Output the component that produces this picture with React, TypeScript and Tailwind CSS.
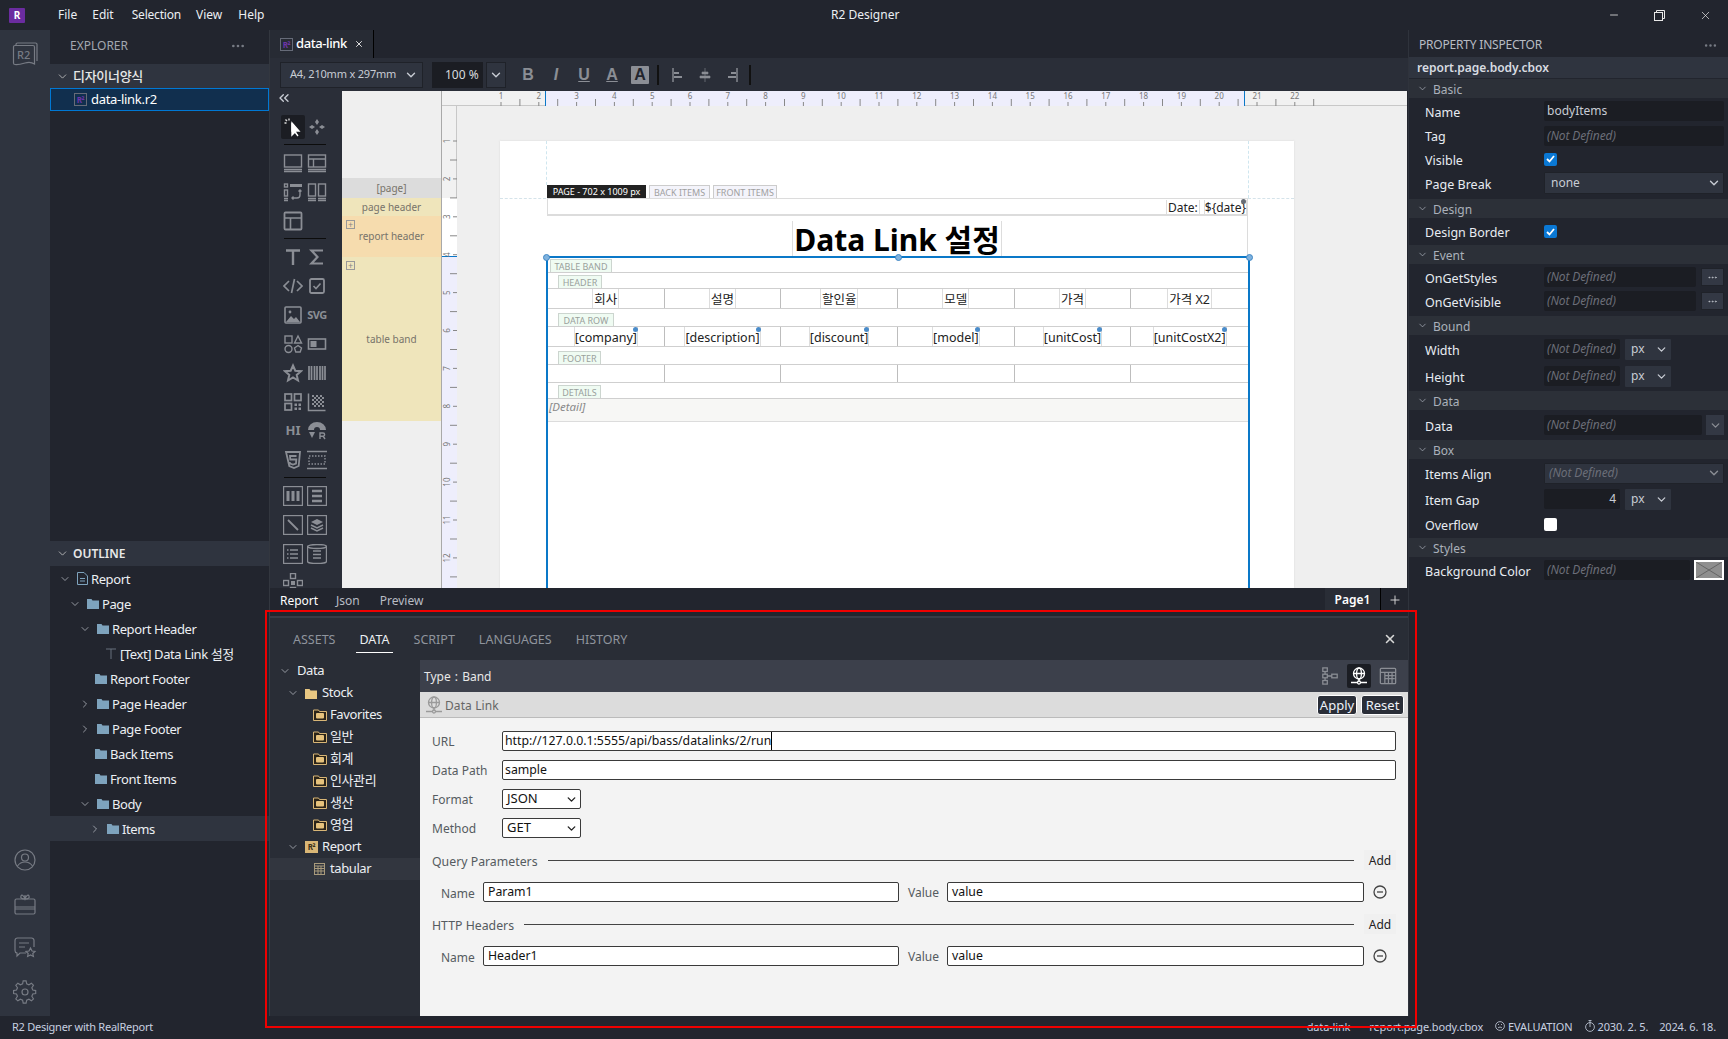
import React from 'react';
import { ChevronDown, ChevronRight, ChevronsLeft, Ellipsis, Minus, Plus, X } from 'lucide-react';

const G = '#8b8e95';

const Svg: React.FC<{ s?: number; c?: string; children: React.ReactNode; vb?: string }> = ({ s = 20, c = G, children, vb = '0 0 20 20' }) => (
  <svg width={s} height={s} viewBox={vb} fill="none" stroke={c} strokeWidth={1.4} className="shrink-0">
    {children}
  </svg>
);

const Folder: React.FC<{ color?: string }> = ({ color = '#7ea3bd' }) => (
  <svg width="12" height="11" viewBox="0 0 12 11" className="shrink-0">
    <path d="M0 1h4.5l1 1.5H12V11H0z" fill={color} />
  </svg>
);

const BoxFolder: React.FC = () => (
  <svg width="14" height="12" viewBox="0 0 14 12" className="shrink-0">
    <path d="M.5 1h5l1 1.5h7v9H.5z" fill="#2b2418" stroke="#d9b676" />
    <rect x="3" y="4" width="8" height="5.5" rx="1" fill="#e6c27c" />
  </svg>
);

const R2File: React.FC = () => (
  <span className="w-[13px] h-[13px] border border-[#666b78] text-[8px] leading-[11px] text-center font-bold text-[#6d35a8] shrink-0">R²</span>
);

const Globe: React.FC<{ c?: string }> = ({ c = '#9a9a9a' }) => (
  <svg width="18" height="18" viewBox="0 0 18 18" fill="none" stroke={c} strokeWidth="1.3" className="shrink-0">
    <circle cx="9" cy="6.5" r="5.5" />
    <ellipse cx="9" cy="6.5" rx="2.4" ry="5.5" />
    <path d="M3.5 6.5h11M9 12v2.5M1 15.5h6M11 15.5h6" />
    <circle cx="9" cy="15.5" r="1.5" />
  </svg>
);

const toolRows: (React.ReactNode[] | string)[] = [
  [
    <Svg><path d="M9 6v12l3-3 3 4" fill="#fff" stroke="#fff" /><path d="M9 6l7 8h-7z" fill="#fff" stroke="#fff" /><path d="M6 1.5v2M1.5 6h2M2.5 2.5L4 4" stroke="#ddd" /></Svg>,
    <Svg><path d="M10 2l2 3-2 3-2-3zM10 12l2 3-2 3-2-3zM2 10l3-2 3 2-3 2zM12 10l3-2 3 2-3 2z" fill={G} stroke="none" /></Svg>,
  ],
  'sep',
  [
    <Svg><rect x="1.5" y="2" width="17" height="12" /><path d="M1 16.5h18M1 18.5h18" /></Svg>,
    <Svg><rect x="1.5" y="2" width="17" height="12" /><path d="M1.5 6h17M6.5 6v8M1 16.5h18M1 18.5h18" /></Svg>,
  ],
  [
    <Svg><path d="M7 2h12v3H7z" fill={G} stroke="none" /><rect x="1.5" y="2" width="3" height="3" /><rect x="1.5" y="8" width="3" height="6" /><path d="M1 16.5h4M1 18.5h4M17 8v5a3 3 0 0 1-3 3H9M15.5 9.5L17 8l1.5 1.5M10.5 14.5L9 16l1.5 1.5" /></Svg>,
    <Svg><rect x="1.5" y="2" width="7" height="12" /><rect x="11.5" y="2" width="7" height="12" /><path d="M1 16.5h8M1 18.5h8M11 16.5h8M11 18.5h8" /></Svg>,
  ],
  [
    <Svg><rect x="1.5" y="1.5" width="17" height="17" rx="1" strokeWidth="1.8" /><path d="M1.5 7h17M7.5 7v11.5" strokeWidth="1.6" /></Svg>,
  ],
  'sep',
  [
    <Svg><path d="M3 3.5h14M10 3.5V18" strokeWidth="2.4" /></Svg>,
    <Svg><path d="M16 3.5H4.5l6 6.5-6 6.5H16" strokeWidth="2.2" /></Svg>,
  ],
  [
    <Svg><path d="M6 5l-5 5 5 5M14 5l5 5-5 5M11.5 3l-3 14" strokeWidth="1.7" /></Svg>,
    <Svg><rect x="3" y="3" width="14" height="14" rx="1.5" strokeWidth="1.8" /><path d="M6.5 10l2.5 2.5 4.5-5" strokeWidth="1.6" /></Svg>,
  ],
  [
    <Svg><rect x="2" y="2" width="16" height="16" rx="1" strokeWidth="1.6" /><path d="M3 17l5-6 3 3 2-2 4 5z" fill={G} stroke="none" /><circle cx="7" cy="7" r="1.4" fill={G} stroke="none" /></Svg>,
    <span className="text-[11px] font-bold text-[#8b8e95] tracking-[-0.5px]">SVG</span>,
  ],
  [
    <Svg><rect x="2" y="2" width="7" height="7" /><path d="M15 2l3.5 7h-7z" /><circle cx="5.5" cy="15" r="3.5" /><path d="M15 11.5l3.5 2.5-1.3 4h-4.4l-1.3-4z" /></Svg>,
    <Svg><rect x="1.5" y="5" width="17" height="10" strokeWidth="1.6" /><rect x="3.5" y="7" width="6" height="6" fill={G} stroke="none" /></Svg>,
  ],
  [
    <Svg><path d="M10 2.5l2.3 5.2 5.7.5-4.3 3.7 1.3 5.6-5-3-5 3 1.3-5.6L2 8.2l5.7-.5z" strokeWidth="2" /></Svg>,
    <Svg><path d="M2 3v14M4.5 3v14M7.5 3v14M10 3v14M13 3v14M15.5 3v14M18 3v14" strokeWidth="1.7" /></Svg>,
  ],
  [
    <Svg><rect x="2" y="2" width="6.5" height="6.5" strokeWidth="1.7" /><rect x="11.5" y="2" width="6.5" height="6.5" strokeWidth="1.7" /><rect x="2" y="11.5" width="6.5" height="6.5" strokeWidth="1.7" /><path d="M11.5 11.5h2.5v2.5h-2.5zM15.5 15.5H18V18h-2.5zM11.5 15.5h2.5V18h-2.5zM15.5 11.5H18V14h-2.5z" fill={G} stroke="none" /></Svg>,
    <Svg><path d="M1.5 1.5v17h17" strokeWidth="1.5" /><path d="M5 3h2v2H5zM9 3h2v2H9zM13 3h2v2h-2zM7 5h2v2H7zM11 5h2v2h-2zM15 5h2v2h-2zM5 7h2v2H5zM9 7h2v2H9zM13 7h2v2h-2zM7 9h2v2H7zM11 9h2v2h-2zM15 9h2v2h-2zM5 11h2v2H5zM9 11h2v2H9zM13 11h2v2h-2zM7 13h2v2H7zM11 13h2v2h-2zM15 13h2v2h-2z" fill={G} stroke="none" /></Svg>,
  ],
  [
    <span className="text-[13px] font-bold text-[#8b8e95]">HI</span>,
    <Svg><path d="M1 9a9 8 0 0 1 18 0h-6a3 3 0 0 0-6 0z" fill={G} stroke="none" /><path d="M2 11h6l-3 6z" fill={G} stroke="none" /><path d="M13 18v-6h3a1.5 1.5 0 0 1 0 3.2h-3M16 15l2 3" /></Svg>,
  ],
  [
    <Svg><path d="M3 2h14l-1.3 14-4.7 2-4.7-2z" strokeWidth="1.8" /><path d="M13.5 6H7l.3 3.5h6L13 13.5l-3 1-3-1-.2-1.5" strokeWidth="1.8" /></Svg>,
    <Svg><path d="M0 1.5h20M0 18.5h20" strokeWidth="1.5" /><rect x="2" y="6" width="16" height="8" strokeDasharray="1.5 1.5" /></Svg>,
  ],
  'sep',
  [
    <Svg><rect x=".5" y=".5" width="19" height="19" /><path d="M5 5v10M10 5v10M15 5v10" strokeWidth="3" /></Svg>,
    <Svg><rect x=".5" y=".5" width="19" height="19" /><path d="M5 5h10M5 10h10M5 15h10" strokeWidth="2.4" /></Svg>,
  ],
  [
    <Svg><rect x=".5" y=".5" width="19" height="19" /><path d="M5 5l10 10" strokeWidth="1.8" /></Svg>,
    <Svg><rect x=".5" y=".5" width="19" height="19" /><path d="M10 4l6 3-6 3-6-3z" fill={G} stroke="none" /><path d="M4 10l6 3 6-3M4 13l6 3 6-3" strokeWidth="1.5" /></Svg>,
  ],
  [
    <Svg><rect x=".5" y=".5" width="19" height="19" /><path d="M7 6h8M7 10h8M7 14h8M4 6h1.5M4 10h1.5M4 14h1.5" strokeWidth="1.5" /></Svg>,
    <Svg><ellipse cx="10" cy="2.5" rx="9.5" ry="2" /><path d="M.5 2.5v15c0 1 4 2 9.500 2s9.500-1 9.500-2v-15M6 7h8M6 10.500h8M6 14h8" /></Svg>,
  ],
  [
    <Svg><rect x="7.500" y="0.500" width="5" height="5" /><rect x="0.500" y="7.500" width="5" height="5" /><rect x="14.500" y="7.500" width="5" height="5" /><rect x="7.500" y="14.500" width="5" height="5" /><rect x="8" y="8" width="4" height="4" fill={G} stroke="none" /></Svg>,
  ],
];

const outline = [
  { label: 'Report', pl: 'pl-[9px]', chev: 'down', icon: 'doc' },
  { label: 'Page', pl: 'pl-[19px]', chev: 'down', icon: 'folder' },
  { label: 'Report Header', pl: 'pl-[29px]', chev: 'down', icon: 'folder' },
  { label: '[Text] Data Link 설정', pl: 'pl-[56px]', icon: 'text' },
  { label: 'Report Footer', pl: 'pl-[45px]', icon: 'folder' },
  { label: 'Page Header', pl: 'pl-[29px]', chev: 'right', icon: 'folder' },
  { label: 'Page Footer', pl: 'pl-[29px]', chev: 'right', icon: 'folder' },
  { label: 'Back Items', pl: 'pl-[45px]', icon: 'folder' },
  { label: 'Front Items', pl: 'pl-[45px]', icon: 'folder' },
  { label: 'Body', pl: 'pl-[29px]', chev: 'down', icon: 'folder' },
  { label: 'Items', pl: 'pl-[39px]', chev: 'right', icon: 'folder', selected: true },
];

const ActivityBar: React.FC = () => (
  <div className="w-[50px] bg-[#2f343f] flex flex-col items-center justify-between pt-[11px] pb-[12px] shrink-0">
    <div className="relative w-[26px] h-[26px]">
      <svg width="26" height="26" viewBox="0 0 26 26" fill="none" stroke="#777b84" strokeWidth="1.2">
        <path d="M3 4.500h18a1.500 1.500 0 0 1 1.500 1.500v17c-3-2-6-2-9.500-1s-7 2-10 1.500a1.500 1.500 0 0 1-1.500-1.500V6A1.500 1.500 0 0 1 3 4.500z" />
        <path d="M4 4.500V3.500A1.500 1.500 0 0 1 5.500 2h18A1.500 1.500 0 0 1 25 3.500V20" />
      </svg>
      <span className="absolute left-[5px] top-[6px] text-[11px] font-medium text-[#777b84]">R2</span>
    </div>
    <div className="flex flex-col items-center gap-[20px]">
      <svg width="24" height="24" viewBox="0 0 24 24" fill="none" stroke="#777b84" strokeWidth="1.2"><circle cx="12" cy="12" r="10" /><circle cx="12" cy="9.500" r="3.500" /><path d="M4.500 18c2-3 4.500-4 7.500-4s5.500 1 7.500 4" /></svg>
      <svg width="24" height="24" viewBox="0 0 24 24" fill="none" stroke="#777b84" strokeWidth="1.2"><rect x="2" y="7" width="20" height="15" rx="1.500" /><path d="M2 15h20M2 17h20M12 7V3M12 7c-3 0-5-1-4-3s3 0 4 3c1-3 3-5 4-3s-1 3-4 3z" /></svg>
      <svg width="24" height="24" viewBox="0 0 24 24" fill="none" stroke="#777b84" strokeWidth="1.2"><path d="M13 17H7l-3 3v-3a2.500 2.500 0 0 1-2-2.500V4.500A2.500 2.500 0 0 1 4.500 2h14A2.500 2.500 0 0 1 21 4.500V11" /><path d="M6 7h10M6 11h6" /><path d="M17.500 12l1.500 3 3 .4-2.200 2.100.6 3-2.900-1.500-2.900 1.500.6-3-2.200-2.100 3-.4z" /></svg>
      <svg width="24" height="24" viewBox="0 0 24 24" fill="none" stroke="#777b84" strokeWidth="1.2"><circle cx="12" cy="12" r="3" /><path d="M10.500 1.500h3l.6 3 2.300 1 2.600-1.700 2.100 2.100L19.400 8.500l1 2.300 3 .6v3l-3 .6-1 2.300 1.700 2.600-2.100 2.100-2.600-1.700-2.300 1-.6 3h-3l-.6-3-2.300-1-2.600 1.700-2.100-2.100 1.700-2.600-1-2.300-3-.6v-3l3-.6 1-2.300-1.700-2.600L5 3.800l2.600 1.700 2.300-1z" transform="translate(0 -.5) scale(.97)" /></svg>
    </div>
  </div>
);

const Explorer: React.FC = () => (
  <div className="w-[219px] flex flex-col shrink-0 bg-[#22252e] text-[13px] tracking-[-0.3px]">
    <div className="h-[34px] flex items-center justify-between pl-[20px] pr-[23px] pb-[2px] shrink-0">
      <span className="text-[#a3a7b0] text-[12px] tracking-normal">EXPLORER</span>
      <Ellipsis size={16} color="#777b84" />
    </div>
    <div className="h-[24px] bg-[#2f343f] flex items-center pl-[6px] gap-[4px] text-[#e8e8e8] font-medium shrink-0">
      <ChevronDown size={13} color="#c8c8c8" strokeWidth={1.5} />
      <span className="pt-[1px]">디자이너양식</span>
    </div>
    <div className="h-[23px] bg-[#112f4e] border border-[#0078d4] flex items-center pl-[23px] gap-[4px] text-white shrink-0">
      <R2File />
      <span>data-link.r2</span>
    </div>
    <div className="h-[430px] shrink-0" />
    <div className="h-[25px] bg-[#2f343f] flex items-center pl-[6px] gap-[4px] text-[#e8e8e8] text-[12px] font-semibold shrink-0 tracking-normal">
      <ChevronDown size={13} color="#c8c8c8" strokeWidth={1.5} />
      <span className="pt-[1px]">OUTLINE</span>
    </div>
    {outline.map((r) => (
      <div key={r.label} className={`h-[25px] flex items-center shrink-0 text-[#eceff3] ${r.pl} ${r.selected ? 'bg-[#2f343f]' : ''}`}>
        {r.chev === 'down' && <ChevronDown size={12} color="#b8bcc4" strokeWidth={1.5} className="mr-[6px]" />}
        {r.chev === 'right' && <ChevronRight size={12} color="#b8bcc4" strokeWidth={1.5} className="mr-[6px]" />}
        {r.icon === 'folder' && <Folder />}
        {r.icon === 'doc' && (
          <svg width="11" height="13" viewBox="0 0 11 13" fill="none" stroke="#7ea3bd" className="shrink-0"><path d="M.5.500h6.500l3.500 3.500v8.500h-10zM3 6.500h5M3 9h5" /></svg>
        )}
        {r.icon === 'text' && (
          <svg width="10" height="11" viewBox="0 0 10 11" fill="none" stroke="#66717c" className="shrink-0"><path d="M0 1h10M5 1v10" /></svg>
        )}
        <span className={`tracking-[-0.4px] pt-[2px] ${r.icon === 'text' ? 'ml-[4px]' : 'ml-[3px]'}`}>{r.label}</span>
      </div>
    ))}
  </div>
);

const Toolbar: React.FC = () => (
  <div className="h-[33px] bg-[#2a2e38] flex items-center pl-[10px] text-[#c8ccd4] shrink-0">
    <div className="w-[143px] h-[26px] bg-[#2f343f] border border-[#1f2229] flex items-center justify-between pl-[9px] pr-[4px] text-[11px]">
      <span className="tracking-[-0.2px]">A4, 210mm x 297mm</span>
      <ChevronDown size={14} strokeWidth={2.4} />
    </div>
    <div className="w-[51px] h-[26px] bg-[#1b1d23] ml-[9px] pl-[13px] text-[12px] flex items-center text-[#d8dade]">100 %</div>
    <div className="w-[20px] h-[26px] bg-[#2f343f] border border-[#1f2229] ml-[3px] flex items-center justify-center">
      <ChevronDown size={14} strokeWidth={2.4} />
    </div>
    <div className="flex items-center ml-[8px] text-[#8b8e95] font-bold text-[16px] [font-family:'Liberation_Sans',sans-serif]">
      <span className="w-[28px] text-center">B</span>
      <span className="w-[28px] text-center italic">I</span>
      <span className="w-[28px] text-center underline">U</span>
      <span className="w-[28px] text-center underline">A</span>
      <span className="w-[18px] h-[18px] leading-[18px] bg-[#8b8e95] text-[#22252e] text-center rounded-[1px] ml-[5px]">A</span>
    </div>
    <div className="w-[2px] h-[20px] bg-[#111] ml-[8px]" />
    <div className="flex items-center gap-[7px] ml-[9px]">
      <Svg><path d="M5 3v14" /><path d="M6 7h5v2H6zM6 11h8v2H6z" fill={G} stroke="none" /></Svg>
      <Svg><path d="M10 3v14M7 7h6v2H7zM5 11h10v2H5z" fill={G} stroke={G} strokeWidth={.6} /></Svg>
      <Svg><path d="M15 3v14" /><path d="M9 7h5v2H9zM6 11h8v2H6z" fill={G} stroke="none" /></Svg>
    </div>
    <div className="w-[2px] h-[20px] bg-[#111] ml-[7px]" />
  </div>
);

const Palette: React.FC = () => (
  <div className="w-[72px] bg-[#2a2e38] flex flex-col items-start pl-[11px] overflow-hidden shrink-0">
    <div className="h-[13px] mb-[11px] flex items-center shrink-0">
      <ChevronsLeft size={16} color="#c8ccd4" strokeWidth={2} className="-ml-[5px]" />
    </div>
    {toolRows.map((row, i) =>
      row === 'sep' ? (
        <div key={i} className="w-[42px] h-[1px] bg-[#0c0c0c] ml-[3px] mb-[6px] shrink-0" />
      ) : (
        <div key={i} className="flex h-[29px] w-[48px] shrink-0">
          {(row as React.ReactNode[]).map((icon, j) => (
            <div key={j} className={`w-[24px] h-[24px] flex items-center justify-center ${i === 0 && j === 0 ? 'bg-[#1b1d23] rounded-[2px]' : ''}`}>
              {icon}
            </div>
          ))}
        </div>
      )
    )}
  </div>
);

const BandLabels: React.FC = () => (
  <div className="w-[100px] border-r border-[#a9a9a9] flex flex-col text-[10px] text-[#77736a] text-center shrink-0 bg-[#efefef]">
    <div className="h-[87px]" />
    <div className="h-[20px] bg-[#dcdcdc] leading-[20px]">[page]</div>
    <div className="h-[18px] bg-[#efe5bb] leading-[18px]">page header</div>
    <div className="h-[41px] bg-[#f6dcae] leading-[41px] relative">
      report header
      <span className="absolute left-[4px] top-[4px] w-[9px] h-[9px] border border-[#999] text-[9px] leading-[7px] text-[#888]">+</span>
    </div>
    <div className="h-[164px] bg-[#efe5bb] relative flex items-center justify-center">
      table band
      <span className="absolute left-[4px] top-[4px] w-[9px] h-[9px] border border-[#999] text-[9px] leading-[7px] text-[#888]">+</span>
    </div>
  </div>
);

const HRuler: React.FC = () => {
  const nums = Array.from({ length: 22 }, (_, i) => i + 1);
  return (
    <svg width="965" height="15" className="block shrink-0 bg-[#f1f1f1] border-b border-[#c8c8c8] overflow-visible">
      <rect x="103" y="0" width="699" height="15" fill="#eeeefc" />
      <path d="M103.500 0v15M802.500 0v15" stroke="#0a78c8" />
      {nums.map((n) => {
        const x = 59 + (n - 1) * 37.8;
        return (
          <g key={n}>
            <path d={`M${x} 11v4M${x + 18.900} 8v7`} stroke="#888" />
            <text x={x} y="8" fontSize="8" fill="#777" textAnchor="middle">{n}</text>
          </g>
        );
      })}
    </svg>
  );
};

const VRuler: React.FC = () => {
  const nums = Array.from({ length: 12 }, (_, i) => i + 1);
  return (
    <svg width="15" height="482" className="block shrink-0 bg-[#f1f1f1] border-r border-[#c8c8c8] overflow-visible">
      <rect x="0" y="92" width="15" height="58" fill="#fff" />
      <rect x="0" y="150" width="15" height="332" fill="#eeeefc" />
      <path d="M0 150.500h15" stroke="#0a78c8" />
      {nums.map((n) => {
        const y = 35 + (n - 1) * 37.9;
        return (
          <g key={n}>
            <path d={`M11 ${y}h4M8 ${y + 19}h7`} stroke="#888" />
            <text x="0" y="0" fontSize="8" fill="#777" textAnchor="middle" transform={`translate(8 ${y}) rotate(-90)`}>{n}</text>
          </g>
        );
      })}
    </svg>
  );
};

const Tag: React.FC<{ children: React.ReactNode; ml: string; w: string }> = ({ children, ml, w }) => (
  <span className={`${ml} ${w} h-[13px] leading-[13px] border border-b-0 border-[#ccd5cf] bg-[#effbf2] text-[9px] text-[#9aa09c] text-center`}>{children}</span>
);

const TagRow: React.FC<{ h: string; children: React.ReactNode }> = ({ h, children }) => (
  <div className={`${h} border-b border-[#cfcfcf] flex items-end`}>{children}</div>
);

const Handle: React.FC<{ big?: boolean; pos: string }> = ({ big, pos }) => (
  <span className={`absolute ${pos} ${big ? 'w-[7px] h-[7px] bg-[#7fb2de] border border-[#3f86c4]' : 'w-[5px] h-[5px] bg-[#4a8bc9]'} rounded-full`} />
);

const headers = ['회사', '설명', '할인율', '모델', '가격', '가격 X2'];
const fields = ['[company]', '[description]', '[discount]', '[model]', '[unitCost]', '[unitCostX2]'];

const ReportPage: React.FC = () => (
  <div className="ml-[43px] mr-[113px] mt-[35px] flex-1 bg-white relative overflow-hidden shadow-[0_0_2px_#d8d8d8]">
    <div className="absolute left-0 top-[57px] w-[46px] border-t border-dashed border-[#d5e3ea]" />
    <div className="absolute right-0 top-[57px] w-[46px] border-t border-dashed border-[#d5e3ea]" />
    <div className="absolute left-[46px] top-0 h-[44px] border-l border-dashed border-[#cfe6ef]" />
    <div className="absolute left-[748px] top-0 h-[57px] border-l border-dashed border-[#cfe6ef]" />
    <div className="ml-[47px] w-[701px] pt-[44px]">
      <div className="flex h-[13px] text-[9px] gap-[3px]">
        <span className="w-[99px] bg-[#222] text-white leading-[14px] text-center">PAGE - 702 x 1009 px</span>
        <span className="w-[61px] border border-b-0 border-[#ccc] bg-[#f4f4fb] text-[#a0a0a0] leading-[13px] text-center">BACK ITEMS</span>
        <span className="w-[64px] border border-b-0 border-[#ccc] bg-[#f4f4fb] text-[#a0a0a0] leading-[13px] text-center">FRONT ITEMS</span>
      </div>
      <div className="h-[18px] border border-[#dcdcdc] border-b-2 flex justify-end items-center text-[12px] text-[#222] gap-[4px] relative">
        <span className="border-x border-[#ddd] px-[1px] translate-y-[1px] leading-[15px]">Date:</span>
        <span className="border-x border-[#ddd] translate-y-[1px] leading-[15px]">{'${date}'}</span>
        <span className="absolute right-[1px] top-[0px] w-[5px] h-[5px] rounded-full bg-[#666c75]" />
      </div>
      <div className="h-[40px] border-r border-[#dcdcdc] flex justify-center items-end relative">
        <span className="text-[30px] leading-[38px] font-bold text-black border-x border-[#ddd] px-[1px] translate-y-[3px]">Data Link 설정</span>
      </div>
    </div>
    <div className="ml-[46px] w-[704px] border-x-2 border-t-2 border-[#0a78c8] relative bg-white h-[400px] text-[12.5px] text-[#222]">
      <Handle big pos="-left-[5px] -top-[4px]" />
      <Handle big pos="left-[347px] -top-[4px]" />
      <Handle big pos="-right-[5px] -top-[4px]" />
      <TagRow h="h-[15px]"><Tag ml="ml-[2px]" w="w-[62px]">TABLE BAND</Tag></TagRow>
      <TagRow h="h-[16px]"><Tag ml="ml-[10px]" w="w-[44px]">HEADER</Tag></TagRow>
      <div className="grid grid-cols-6 h-[20px] border-b border-[#cfcfcf]">
        {headers.map((t) => (
          <div key={t} className="border-r last:border-r-0 border-[#bdbdbd] flex items-center justify-center">
            <span className="border-x border-[#ddd] px-[1px] pt-[2px] leading-[17px]">{t}</span>
          </div>
        ))}
      </div>
      <TagRow h="h-[18px]"><Tag ml="ml-[10px]" w="w-[56px]">DATA ROW</Tag></TagRow>
      <div className="grid grid-cols-6 h-[20px] border-b border-[#cfcfcf]">
        {fields.map((t) => (
          <div key={t} className="border-r last:border-r-0 border-[#bdbdbd] flex items-center justify-center">
            <span className="border-x border-[#ddd] pt-[2px] leading-[17px] relative">
              {t}
              <Handle pos="-right-[1px] top-[0px]" />
            </span>
          </div>
        ))}
      </div>
      <TagRow h="h-[18px]"><Tag ml="ml-[10px]" w="w-[43px]">FOOTER</Tag></TagRow>
      <div className="grid grid-cols-6 h-[18px] border-b border-[#cfcfcf]">
        {fields.map((t) => <div key={t} className="border-r last:border-r-0 border-[#bdbdbd]" />)}
      </div>
      <TagRow h="h-[16px]"><Tag ml="ml-[10px]" w="w-[43px]">DETAILS</Tag></TagRow>
      <div className="h-[23px] bg-[#f7f7f5] border-b border-[#dcdcdc] flex items-center pl-[1px] pb-[6px] italic text-[11.5px] text-[#8a8a8a]">[Detail]</div>
    </div>
  </div>
);

const Designer: React.FC = () => (
  <div className="h-[497px] flex shrink-0 overflow-hidden">
    <Palette />
    <BandLabels />
    <div className="flex flex-col w-[965px] bg-[#efefef]">
      <HRuler />
      <div className="flex h-[482px]">
        <VRuler />
        <ReportPage />
      </div>
    </div>
  </div>
);

const dataTree = ['일반', '회계', '인사관리', '생산', '영업'];

const DataTree: React.FC = () => (
  <div className="w-[150px] shrink-0 bg-[#292d36] text-[13px] text-[#eceff3] tracking-[-0.4px]">
    <div className="h-[22px] flex items-center pl-[9px]">
      <ChevronDown size={12} color="#b8bcc4" strokeWidth={1.5} className="mr-[6px]" /><span>Data</span>
    </div>
    <div className="h-[22px] flex items-center pl-[17px]">
      <ChevronDown size={12} color="#b8bcc4" strokeWidth={1.5} className="mr-[6px]" /><Folder color="#e8c782" /><span className="ml-[5px]">Stock</span>
    </div>
    <div className="h-[22px] flex items-center pl-[43px]"><BoxFolder /><span className="ml-[3px]">Favorites</span></div>
    {dataTree.map((r) => (
      <div key={r} className="h-[22px] flex items-center pl-[43px]"><BoxFolder /><span className="ml-[3px]">{r}</span></div>
    ))}
    <div className="h-[22px] flex items-center pl-[17px]">
      <ChevronDown size={12} color="#b8bcc4" strokeWidth={1.5} className="mr-[6px]" />
      <span className="w-[13px] h-[12px] bg-[#d9b676] text-[#3a2f18] text-[8px] leading-[12px] text-center font-bold">R²</span>
      <span className="ml-[4px]">Report</span>
    </div>
    <div className="h-[22px] flex items-center pl-[44px] bg-[#32363f]">
      <svg width="11" height="12" viewBox="0 0 11 12" fill="none" stroke="#a89a7c" className="shrink-0"><rect x=".5" y=".5" width="10" height="11" /><path d="M.5 3h10M.5 5.500h10M.5 8h10M4 3v8.500M7 3v8.500" /></svg>
      <span className="ml-[5px]">tabular</span>
    </div>
  </div>
);

const Input: React.FC<{ children?: React.ReactNode; w: string }> = ({ children, w }) => (
  <div className={`${w} h-[20px] bg-white border border-[#3a3a3a] rounded-[2px] flex items-center pl-[2px] text-[12.3px] text-[#111] shrink-0`}>{children}</div>
);

const FormSelect: React.FC<{ value: string }> = ({ value }) => (
  <div className="w-[79px] h-[20px] bg-white border border-[#3a3a3a] rounded-[2px] flex items-center justify-between pl-[4px] pr-[2px] text-[13px] text-[#111]">
    <span>{value}</span><ChevronDown size={13} strokeWidth={2.6} color="#222" />
  </div>
);

const ParamHeader: React.FC<{ label: string }> = ({ label }) => (
  <div className="h-[20px] flex items-center">
    <span className="text-[12.3px] pt-[4px] text-[#555b60] shrink-0">{label}</span>
    <div className="flex-1 h-px bg-[#444] ml-[10px]" />
    <span className="w-[32px] h-[20px] ml-[10px] bg-[#f0f0f0] text-[12px] text-[#222] leading-[21px] text-center">Add</span>
  </div>
);

const ParamRow: React.FC<{ name: string; value: string }> = ({ name, value }) => (
  <div className="h-[20px] flex items-center text-[12px] text-[#555b60]">
    <span className="w-[51px] pl-[9px] pt-[3px] shrink-0">Name</span>
    <Input w="w-[416px]"><span className="pl-[2px] pt-[1px]">{name}</span></Input>
    <span className="w-[48px] pl-[9px] pt-[2px] shrink-0">Value</span>
    <Input w="w-[417px]"><span className="pl-[2px] pt-[1px]">{value}</span></Input>
    <svg width="14" height="14" viewBox="0 0 14 14" fill="none" stroke="#444" strokeWidth="1.3" className="ml-[9px]"><circle cx="7" cy="7" r="6" /><path d="M4 7h6" /></svg>
  </div>
);

const FormRow: React.FC<{ label: string; children: React.ReactNode }> = ({ label, children }) => (
  <div className="h-[20px] flex items-center mb-[9px]">
    <span className="w-[70px] text-[12px] text-[#555b60] pt-[2px] shrink-0">{label}</span>
    {children}
  </div>
);

const BottomPanel: React.FC = () => (
  <div className="h-[404px] flex flex-col shrink-0 border-l border-[#3a3e48] -ml-px bg-[#292d36] relative">
    <div className="h-[4px] bg-[#22252e] shrink-0" />
    <div className="h-[2px] bg-[#383c46] shrink-0" />
    <div className="h-[42px] flex items-center pl-[23px] text-[12.5px] text-[#8f949d] gap-[24px] relative shrink-0">
      <span className="pt-[2px]">ASSETS</span>
      <span className="text-[#eceff3] relative pt-[2px]">DATA<span className="absolute -left-[3px] -right-[3px] top-[23px] h-px bg-white" /></span>
      <span className="pt-[2px]">SCRIPT</span>
      <span className="pt-[2px]">LANGUAGES</span>
      <span className="pt-[2px]">HISTORY</span>
      <X size={14} color="#d8d8d8" strokeWidth={2.6} className="absolute right-[11px] top-[14px]" />
    </div>
    <div className="flex flex-1 min-h-0">
      <DataTree />
      <div className="flex-1 flex flex-col min-w-0">
        <div className="h-[32px] bg-[#3c404b] flex items-center pl-[4px] pr-[11px] text-[12px] text-[#e8e8e8] shrink-0">
          <span className="flex-1 pt-[1px] [word-spacing:1px]">Type : Band</span>
          <Svg s={18}><rect x="2" y="1" width="5" height="4" /><rect x="2" y="8" width="5" height="4" /><rect x="2" y="15" width="5" height="4" /><rect x="12" y="8" width="6" height="4" /><path d="M4.500 5v3M4.500 12v3M7 10h5" /></Svg>
          <div className="w-[24px] h-[24px] bg-[#1b1d23] rounded-[2px] flex items-center justify-center mx-[8px]"><Globe c="#fff" /></div>
          <Svg s={18}><rect x="1.500" y="1.500" width="17" height="17" rx="1" /><path d="M1.500 6h17M6.500 9.500h11M6.500 13h11M6.500 6v12M10.500 6v12M14.500 6v12" /></Svg>
        </div>
        <div className="h-[26px] bg-[#dcdcdc] border-b border-[#bbb] flex items-center pl-[5px] pr-[4px] text-[12px] text-[#666] shrink-0">
          <Globe />
          <span className="ml-[2px] pt-[3px] flex-1 tracking-[0.1px]">Data Link</span>
          <div className="flex gap-[4px] text-[13px] text-[#eef2f8]">
            <span className="w-[40px] h-[20px] leading-[18px] text-center bg-[#2a2e38] border border-white rounded-[3px]">Apply</span>
            <span className="w-[43px] h-[20px] leading-[18px] text-center bg-[#2a2e38] border border-white rounded-[3px]">Reset</span>
          </div>
        </div>
        <div className="flex-1 bg-[#f3f3f3] pt-[13px] pl-[12px] pr-[12px]">
          <FormRow label="URL">
            <Input w="w-[894px]"><span className="border-r border-black">http://127.0.0.1:5555/api/bass/datalinks/2/run</span></Input>
          </FormRow>
          <FormRow label="Data Path"><Input w="w-[894px]">sample</Input></FormRow>
          <FormRow label="Format"><FormSelect value="JSON" /></FormRow>
          <FormRow label="Method"><FormSelect value="GET" /></FormRow>
          <div className="pt-[3px]"><ParamHeader label="Query Parameters" /></div>
          <div className="pt-[12px]"><ParamRow name="Param1" value="value" /></div>
          <div className="pt-[12px]"><ParamHeader label="HTTP Headers" /></div>
          <div className="pt-[12px]"><ParamRow name="Header1" value="value" /></div>
        </div>
      </div>
    </div>
  </div>
);

const Center: React.FC = () => (
  <div className="flex-1 flex flex-col min-w-0 border-l border-[#33373f]">
    <div className="h-[28px] flex shrink-0">
      <div className="w-[104px] bg-[#272b34] border-r border-black flex items-center pl-[10px] gap-[3px] text-[13px] text-white font-medium tracking-[-0.4px]">
        <R2File />
        <span>data-link</span>
        <X size={10} color="#ddd" strokeWidth={2.4} className="ml-[4px]" />
      </div>
    </div>
    <Toolbar />
    <Designer />
    <div className="h-[24px] flex items-center shrink-0 text-[12px] text-[#b8bcc4]">
      <span className="w-[57px] h-full bg-[#22252e] pl-[10px] pt-[1px] leading-[24px] text-white">Report</span>
      <span className="ml-[9px] pt-[1px]">Json</span>
      <span className="ml-[20px] pt-[1px]">Preview</span>
      <div className="ml-auto w-[56px] h-full bg-[#292d36] border-r border-black flex items-center justify-center text-white font-semibold">Page1</div>
      <div className="w-[27px] flex items-center justify-center"><Plus size={14} color="#ddd" strokeWidth={1.6} /></div>
    </div>
    <BottomPanel />
  </div>
);

const Section: React.FC<{ label: string }> = ({ label }) => (
  <div className="h-[19px] bg-[#2c3038] flex items-center pl-[8px] gap-[5px] text-[12px] text-[#aab0ba] shrink-0">
    <ChevronDown size={11} color="#aab0ba" strokeWidth={1.6} />
    <span className="pt-[3px]">{label}</span>
  </div>
);

const Row: React.FC<{ label: string; h: string; children: React.ReactNode }> = ({ label, h, children }) => (
  <div className={`${h} flex items-center pl-[16px] shrink-0`}>
    <span className="w-[119px] text-[12.5px] text-[#e8ecf2] pt-[4px] shrink-0">{label}</span>
    {children}
  </div>
);

const NotDefined = () => <span className="italic text-[#6b6e78] text-[12px] tracking-[-0.1px]">(Not Defined)</span>;

const Field: React.FC<{ w: string; children?: React.ReactNode; right?: boolean }> = ({ w, children, right }) => (
  <div className={`${w} h-[20px] bg-[#1b1d23] rounded-[2px] flex items-center px-[3px] text-[12px] text-[#c8ccd4] whitespace-nowrap shrink-0 ${right ? 'justify-end pr-[4px]' : ''}`}>{children}</div>
);

const Check: React.FC = () => (
  <span className="w-[13px] h-[13px] rounded-[2px] bg-[#0a78d4] flex items-center justify-center">
    <svg width="9" height="8" viewBox="0 0 9 8" fill="none" stroke="#fff" strokeWidth="1.800"><path d="M1 4l2.500 2.500L8 1" /></svg>
  </span>
);

const Unit: React.FC = () => (
  <div className="w-[46px] h-[21px] ml-[5px] bg-[#2f343f] rounded-[1px] flex items-center justify-between pl-[6px] pr-[3px] text-[12px] text-[#c8ccd4] shrink-0">
    <span>px</span><ChevronDown size={13} strokeWidth={2.4} />
  </div>
);

const Dots: React.FC = () => (
  <div className="w-[23px] h-[18px] ml-[5px] bg-[#333844] border border-[#1f2229] flex items-center justify-center shrink-0"><Ellipsis size={11} color="#b8bcc4" /></div>
);

const PropertyInspector: React.FC = () => (
  <div className="w-[320px] shrink-0 border-l border-[#2f333c] flex flex-col bg-[#22252e]">
    <div className="h-[27px] flex items-center justify-between pl-[10px] pr-[10px] pt-[3px] text-[12px] text-[#b8bcc4] shrink-0 tracking-[-0.2px]">
      <span>PROPERTY INSPECTOR</span>
      <Ellipsis size={15} color="#777b84" />
    </div>
    <div className="h-[21px] bg-[#2f343f] pl-[8px] text-[12px] leading-[21px] font-semibold text-[#d8dce2] mb-px shrink-0">report.page.body.cbox</div>
    <Section label="Basic" />
    <Row label="Name" h="h-[26px]"><Field w="w-[180px]">bodyItems</Field></Row>
    <Row label="Tag" h="h-[23px]"><Field w="w-[180px]"><NotDefined /></Field></Row>
    <Row label="Visible" h="h-[24px]"><Check /></Row>
    <Row label="Page Break" h="h-[24px]">
      <div className="w-[180px] h-[22px] bg-[#2f343f] border border-[#1f2229] rounded-[1px] flex items-center justify-between pl-[6px] pr-[2px] text-[12px] text-[#c8ccd4]"><span>none</span><ChevronDown size={14} strokeWidth={2.4} /></div>
    </Row>
    <div className="h-[4px] shrink-0" />
    <Section label="Design" />
    <Row label="Design Border" h="h-[27px]"><Check /></Row>
    <Section label="Event" />
    <Row label="OnGetStyles" h="h-[26px]"><Field w="w-[152px]"><NotDefined /></Field><Dots /></Row>
    <Row label="OnGetVisible" h="h-[22px]"><Field w="w-[152px]"><NotDefined /></Field><Dots /></Row>
    <div className="h-[4px] shrink-0" />
    <Section label="Bound" />
    <Row label="Width" h="h-[28px]"><Field w="w-[76px]"><NotDefined /></Field><Unit /></Row>
    <Row label="Height" h="h-[26px]"><Field w="w-[76px]"><NotDefined /></Field><Unit /></Row>
    <div className="h-[2px] shrink-0" />
    <Section label="Data" />
    <Row label="Data" h="h-[30px]">
      <Field w="w-[158px]"><NotDefined /></Field>
      <div className="w-[18px] h-[20px] ml-[4px] bg-[#333844] flex items-center justify-center text-[#8b8e95]"><ChevronDown size={13} strokeWidth={2.4} /></div>
    </Row>
    <Section label="Box" />
    <Row label="Items Align" h="h-[28px]">
      <div className="w-[180px] h-[21px] bg-[#2f343f] border border-[#1f2229] rounded-[1px] flex items-center justify-between pl-[4px] pr-[2px] text-[#8b8e95]"><NotDefined /><ChevronDown size={14} strokeWidth={2.4} /></div>
    </Row>
    <Row label="Item Gap" h="h-[24px]"><Field w="w-[76px]" right>4</Field><Unit /></Row>
    <Row label="Overflow" h="h-[27px]"><span className="w-[13px] h-[13px] rounded-[2px] bg-white" /></Row>
    <Section label="Styles" />
    <Row label="Background Color" h="h-[26px]">
      <Field w="w-[146px]"><NotDefined /></Field>
      <div className="w-[30px] h-[20px] ml-[4px] border-2 border-white bg-[#8f8f8f] shrink-0">
        <svg width="26" height="16" viewBox="0 0 26 16" stroke="#666" strokeWidth="1" className="block"><path d="M0 0l26 16M26 0L0 16" /></svg>
      </div>
    </Row>
  </div>
);

export default function App() {
  return (
    <div className="w-[1728px] h-[1039px] relative overflow-hidden flex flex-col bg-[#22252e] font-['Noto_Sans','Noto_Sans_CJK_KR',sans-serif]">
      {/* title bar */}
      <div className="h-[30px] flex items-center relative shrink-0 text-[12px] text-[#eceff3]">
        <div className="w-[16px] h-[15px] ml-[9px] mr-[33px] bg-[#6b2ca0] rounded-[1px] text-white text-[10px] font-bold text-center leading-[15px]">R</div>
        <span className="mr-[15px]">File</span>
        <span className="mr-[18px]">Edit</span>
        <span className="mr-[15px] tracking-[-0.2px]">Selection</span>
        <span className="mr-[16px]">View</span>
        <span>Help</span>
        <span className="flex-1 text-center pr-[142px]">R2 Designer</span>
        <div className="flex items-center gap-[34px] pr-[16px] text-[#e8e8e8]">
          <Minus size={12} strokeWidth={1.6} />
          <svg width="11" height="11" viewBox="0 0 11 11" fill="none" stroke="currentColor"><rect x=".5" y="2.500" width="8" height="8" /><path d="M2.500 2.500v-2h8v8h-2" /></svg>
          <X size={13} strokeWidth={1.3} />
        </div>
      </div>

      <div className="flex h-[986px] shrink-0 overflow-hidden">
        <ActivityBar />
        <Explorer />
        <Center />
        <PropertyInspector />
      </div>

      {/* status bar */}
      <div className="flex-1 flex items-center pl-[12px] pr-[12px] text-[11px] text-[#c8d0e0] tracking-[-0.15px]">
        <span className="tracking-[-0.25px]">R2 Designer with RealReport</span>
        <span className="ml-auto">data-link</span>
        <span className="ml-[19px]">report.page.body.cbox</span>
        <svg width="10" height="10" viewBox="0 0 10 10" fill="none" stroke="#c8d0e0" strokeWidth=".8" className="ml-[12px] -mt-[4px]"><circle cx="5" cy="5" r="4.400" /><path d="M3 7c1-1.200 3-1.200 4 0M3 3.500h1M6 3.500h1" /></svg>
        <span className="ml-[3px]">EVALUATION</span>
        <svg width="10" height="12" viewBox="0 0 10 12" fill="none" stroke="#c8d0e0" strokeWidth=".8" className="ml-[12px] -mt-[4px]"><circle cx="5" cy="7" r="4.400" /><path d="M3.500.5h3M5 .5v6.500" /></svg>
        <span className="ml-[3px]">2030. 2. 5.</span>
        <span className="ml-[11px]">2024. 6. 18.</span>
      </div>

      {/* red annotation frame */}
      <div className="absolute left-[265px] top-[610px] w-[1152px] h-[418px] border-[2.5px] border-[#f00000] pointer-events-none" />
    </div>
  );
}
